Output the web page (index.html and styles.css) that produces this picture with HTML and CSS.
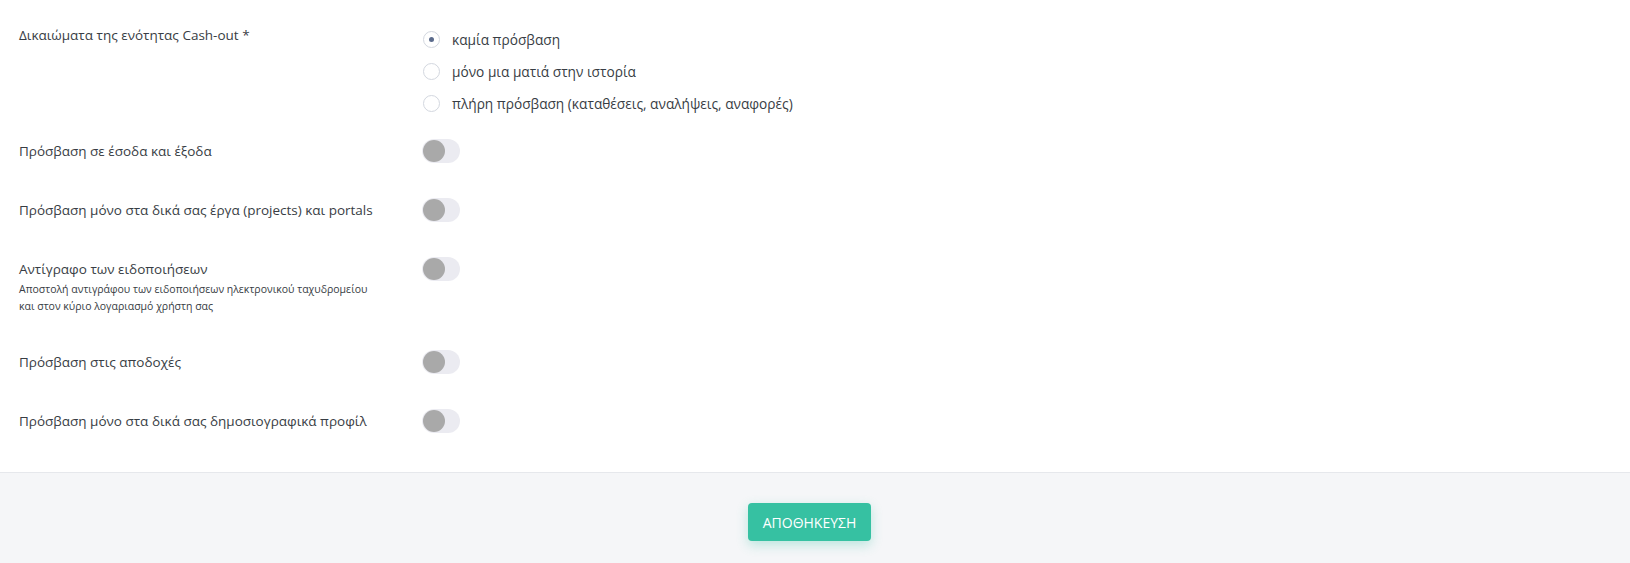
FILE: index.html
```html
<!DOCTYPE html>
<html>
<head>
  <title>Δικαιώματα χρήστη</title>
  <meta name="viewport" content="width=device-width, initial-scale=1">
  <link rel="stylesheet" href="styles.css">
</head>
<body>
  <div class="settings">
    <div class="row row--radios">
      <div class="row-label">Δικαιώματα της ενότητας Cash-out *</div>
      <div class="radio-group">
        <label class="radio">
          <input type="radio" name="cashout" value="none" checked>
          <span class="radio-mark"></span>
          καμία πρόσβαση
        </label>
        <label class="radio">
          <input type="radio" name="cashout" value="view">
          <span class="radio-mark"></span>
          μόνο μια ματιά στην ιστορία
        </label>
        <label class="radio">
          <input type="radio" name="cashout" value="full">
          <span class="radio-mark"></span>
          πλήρη πρόσβαση (καταθέσεις, αναλήψεις, αναφορές)
        </label>
      </div>
    </div>

    <div class="row">
      <div class="row-label">Πρόσβαση σε έσοδα και έξοδα</div>
      <label class="switch"><input type="checkbox"><span class="switch-track"></span></label>
    </div>

    <div class="row">
      <div class="row-label">Πρόσβαση μόνο στα δικά σας έργα (projects) και portals</div>
      <label class="switch"><input type="checkbox"><span class="switch-track"></span></label>
    </div>

    <div class="row">
      <div class="row-label">
        Αντίγραφο των ειδοποιήσεων
        <div class="row-hint">Αποστολή αντιγράφου των ειδοποιήσεων ηλεκτρονικού ταχυδρομείου και στον κύριο λογαριασμό χρήστη σας</div>
      </div>
      <label class="switch"><input type="checkbox"><span class="switch-track"></span></label>
    </div>

    <div class="row">
      <div class="row-label">Πρόσβαση στις αποδοχές</div>
      <label class="switch"><input type="checkbox"><span class="switch-track"></span></label>
    </div>

    <div class="row">
      <div class="row-label">Πρόσβαση μόνο στα δικά σας δημοσιογραφικά προφίλ</div>
      <label class="switch"><input type="checkbox"><span class="switch-track"></span></label>
    </div>
  </div>

  <div class="footer">
    <button type="submit" class="btn-save">ΑΠΟΘΗΚΕΥΣΗ</button>
  </div>
</body>
</html>
```

FILE: styles.css
```css
:root {
  --text-color: #383d44;
  --muted-border: #d3d7df;
  --radio-dot: #5b6b8c;
  --track-color: #ebebf1;
  --knob-color: #a9a9a9;
  --footer-bg: #f5f6f8;
  --footer-border: #e6e8ec;
  --primary: #36c1a2;
  --font-family: 'Open Sans', 'Noto Sans', sans-serif;
}

body {
  margin: 0;
  padding: 0;
  background: #fff;
  color: var(--text-color);
  font-family: var(--font-family);
  font-size: 13.5px;
}

.settings {
  padding: 6px 0 21px 19px;
}

.row {
  display: flex;
  align-items: flex-start;
  padding: 17px 0 18px;
}

.row--radios {
  padding-bottom: 3px;
}

.row-label {
  width: 403px;
  flex-shrink: 0;
  line-height: 24px;
}

.row-hint {
  max-width: 355px;
  font-size: 10.5px;
  line-height: 17px;
}

/* radios */
.radio-group {
  display: flex;
  flex-direction: column;
}

.radio {
  display: flex;
  align-items: center;
  gap: 12px;
  height: 32px;
  font-size: 13.7px;
  cursor: pointer;
}

.radio input,
.switch input {
  display: none;
}

.radio-mark {
  width: 15px;
  height: 15px;
  margin-left: 1px;
  border: 1px solid var(--muted-border);
  border-radius: 50%;
  display: flex;
  align-items: center;
  justify-content: center;
}

.radio input:checked + .radio-mark::after {
  content: "";
  width: 5px;
  height: 5px;
  border-radius: 50%;
  background: var(--radio-dot);
}

/* switches */
.switch {
  cursor: pointer;
}

.switch-track {
  display: block;
  position: relative;
  width: 38px;
  height: 24px;
  border-radius: 12px;
  background: var(--track-color);
}

.switch-track::after {
  content: "";
  position: absolute;
  top: 1px;
  left: 1px;
  width: 22px;
  height: 22px;
  border-radius: 50%;
  background: var(--knob-color);
  transition: left 0.2s;
}

.switch input:checked + .switch-track::after {
  left: 15px;
}

/* footer */
.footer {
  border-top: 1px solid var(--footer-border);
  background: var(--footer-bg);
  padding: 30px 11px 30px 0;
  display: flex;
  justify-content: center;
}

.btn-save {
  background: var(--primary);
  color: #fff;
  border: none;
  border-radius: 4px;
  width: 123px;
  height: 38px;
  font-family: var(--font-family);
  font-size: 14px;
  cursor: pointer;
  box-shadow: 0 4px 12px rgba(54, 193, 162, 0.3);
}
```
